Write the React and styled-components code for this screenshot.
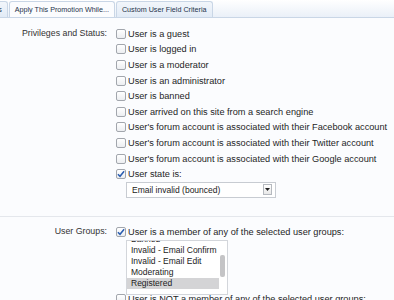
import React from "react";
import styled, { createGlobalStyle } from "styled-components";

const GlobalStyle = createGlobalStyle`
  body {
    margin: 0;
    background: #fbfcfe;
    font-family: "Liberation Sans", Arial, sans-serif;
    color: #222;
  }
`;

const Page = styled.div`
  width: 394px;
  height: 300px;
  overflow: hidden;
  background: #fbfcfe;
`;

const TabBar = styled.div`
  height: 17px;
  display: flex;
  align-items: flex-end;
  border-bottom: 1px solid #c9d6e6;
  background: linear-gradient(#ffffff, #eaf0f8);
  overflow: hidden;
`;

const Tab = styled.div`
  padding: 0 5px;
  margin-right: 1px;
  font-size: 7.2px;
  line-height: 15px;
  white-space: nowrap;
  color: #24324a;
  border: 1px solid #c9d6e6;
  border-bottom: none;
  border-radius: 3px 3px 0 0;
  background: ${(p) => (p.active ? "#fbfcfe" : "linear-gradient(#f2f6fb, #e2ebf6)")};
  margin-bottom: ${(p) => (p.active ? "-1px" : "0")};
  height: ${(p) => (p.active ? "16px" : "15px")};
  margin-left: ${(p) => p.offset || "0"};
`;

const Section = styled.div`
  display: grid;
  grid-template-columns: 107px 1fr;
  column-gap: 9px;
  padding: ${(p) => p.pad || "8px 0 0"};
  border-bottom: ${(p) => (p.divider ? "1px solid #e4e7ec" : "none")};
`;

const Label = styled.div`
  text-align: right;
  font-size: 8.8px;
  line-height: 15.6px;
  color: #333;
  white-space: nowrap;
`;

const Options = styled.div`
  display: flex;
  flex-direction: column;
`;

const Option = styled.label`
  display: flex;
  align-items: center;
  gap: 2px;
  height: 15.6px;
  margin-top: ${(p) => p.top || "0"};
  font-size: 9.2px;
  white-space: nowrap;
  color: #1e1e1e;
`;

const Box = styled.span`
  width: 8px;
  height: 8px;
  border: 1px solid #a2a6ad;
  border-radius: 2px;
  background: linear-gradient(#ffffff, #eceef1);
  display: inline-flex;
  align-items: center;
  justify-content: center;
  flex: none;
`;

const Indent = styled.div`
  padding-left: 10px;
`;

const Select = styled.div`
  width: 143px;
  height: 14px;
  border: 1px solid #c8ccd2;
  background: #fff;
  display: flex;
  align-items: center;
  justify-content: space-between;
  padding-left: 5px;
  font-size: 8.5px;
  color: #222;
`;

const Arrow = styled.span`
  width: 7px;
  height: 9px;
  margin-right: 3px;
  border: 1px solid #b5b9bf;
  background: linear-gradient(#fff, #e8e8e8);
  display: flex;
  align-items: center;
  justify-content: center;
`;

const ListBox = styled.div`
  position: relative;
  width: 100px;
  height: 53px;
  border: 1px solid #d3d6db;
  background: #fff;
  overflow: hidden;
`;

const ListInner = styled.div`
  margin-top: -7px;
`;

const ListItem = styled.div`
  height: 11px;
  line-height: 11px;
  font-size: 8.5px;
  padding-left: 4px;
  margin-right: 8px;
  color: #222;
  white-space: nowrap;
  background: ${(p) => (p.selected ? "#d4d4d6" : "transparent")};
`;

const ScrollThumb = styled.div`
  position: absolute;
  right: 2px;
  top: 14px;
  width: 5px;
  height: 22px;
  border-radius: 2px;
  background: #c4c4c6;
`;

const Check = () => (
  <svg width="9" height="8" viewBox="0 0 9 8">
    <path d="M1 4.2 L3.4 6.6 L8 0.8" fill="none" stroke="#2a5db0" strokeWidth="1.7" />
  </svg>
);

const Checkbox = ({ checked, top, children }) => (
  <Option top={top}>
    <Box>{checked && <Check />}</Box>
    {children}
  </Option>
);

const privileges = [
  "User is a guest",
  "User is logged in",
  "User is a moderator",
  "User is an administrator",
  "User is banned",
  "User arrived on this site from a search engine",
  "User's forum account is associated with their Facebook account",
  "User's forum account is associated with their Twitter account",
  "User's forum account is associated with their Google account",
];

const groups = [
  "Banned",
  "Invalid - Email Confirm",
  "Invalid - Email Edit",
  "Moderating",
  "Registered",
];

export default function App() {
  return (
    <Page>
      <GlobalStyle />
      <TabBar>
        <Tab offset="-61px">Promotion Details</Tab>
        <Tab active>Apply This Promotion While...</Tab>
        <Tab>Custom User Field Criteria</Tab>
      </TabBar>

      <Section divider pad="8px 0 18px">
        <Label>Privileges and Status:</Label>
        <Options>
          {privileges.map((text) => (
            <Checkbox key={text}>{text}</Checkbox>
          ))}
          <Checkbox checked>User state is:</Checkbox>
          <Indent>
            <Select>
              Email invalid (bounced)
              <Arrow>
                <svg width="5" height="5" viewBox="0 0 5 5">
                  <path d="M0 1 L5 1 L2.5 4 Z" fill="#222" />
                </svg>
              </Arrow>
            </Select>
          </Indent>
        </Options>
      </Section>

      <Section pad="7px 0 0">
        <Label>User Groups:</Label>
        <Options>
          <Checkbox checked>User is a member of any of the selected user groups:</Checkbox>
          <Indent>
            <ListBox>
              <ListInner>
                {groups.map((g) => (
                  <ListItem key={g} selected={g === "Registered"}>
                    {g}
                  </ListItem>
                ))}
              </ListInner>
              <ScrollThumb />
            </ListBox>
          </Indent>
          <Checkbox top="-3px">User is NOT a member of any of the selected user groups:</Checkbox>
        </Options>
      </Section>
    </Page>
  );
}
